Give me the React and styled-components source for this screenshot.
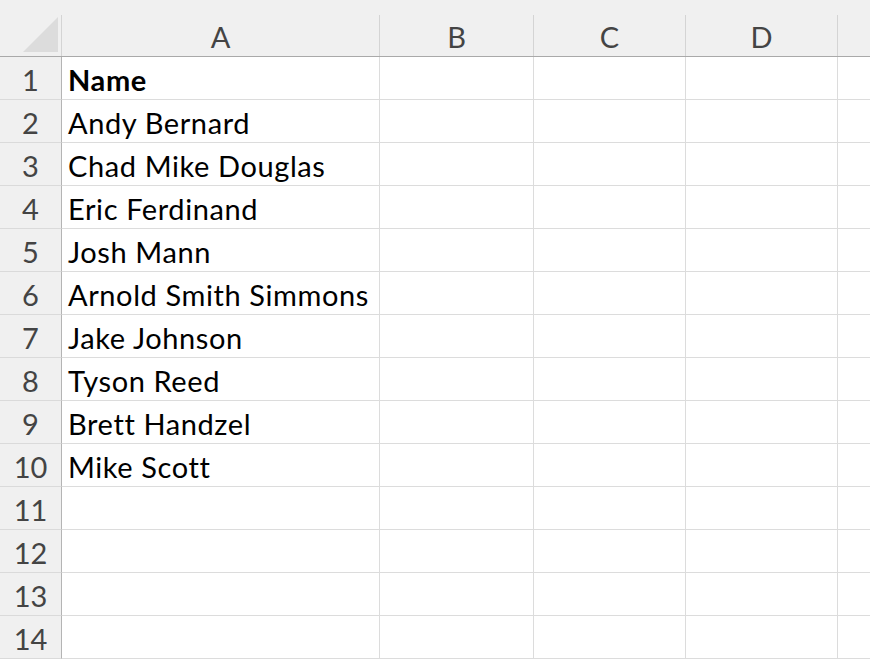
import React from "react";
import styled, { createGlobalStyle, css } from "styled-components";

const GlobalStyle = createGlobalStyle`
  html, body {
    margin: 0;
    padding: 0;
    background: #ffffff;
  }
  body {
    font-family: "Lato", "Liberation Sans", sans-serif;
    overflow: hidden;
  }
`;

const NAMES = [
  "Name",
  "Andy Bernard",
  "Chad Mike Douglas",
  "Eric Ferdinand",
  "Josh Mann",
  "Arnold Smith Simmons",
  "Jake Johnson",
  "Tyson Reed",
  "Brett Handzel",
  "Mike Scott",
];

const COLUMNS = ["A", "B", "C", "D", ""];
const ROW_COUNT = 14;

const gridColumns = css`
  display: grid;
  grid-template-columns: 62px 318px 154px 152px 152px 1fr;
`;

const Sheet = styled.div`
  width: 870px;
  height: 659px;
  overflow: hidden;
  display: flex;
  flex-direction: column;
  font-size: 29px;
`;

const HeaderRow = styled.div`
  ${gridColumns};
  padding-top: 15px;
  height: 58px;
  box-sizing: border-box;
  background: #f0f0f0;
  border-bottom: 1px solid #a9a9a9;
`;

const Corner = styled.div`
  display: flex;
  justify-content: flex-end;
  align-items: flex-end;
  padding: 0 3px 4px 0;
  border-right: 1px solid #d4d4d4;
`;

const Triangle = styled.div`
  width: 35px;
  height: 35px;
  background: #dcdcdc;
  clip-path: polygon(100% 0, 100% 100%, 0 100%);
`;

const ColHead = styled.div`
  display: flex;
  align-items: center;
  justify-content: center;
  padding-top: 1px;
  color: #444444;
  border-right: 1px solid #d4d4d4;
  ${(p) => p.$last && "border-right: none;"}
`;

const Row = styled.div`
  ${gridColumns};
  height: 43px;
  flex-shrink: 0;
`;

const RowHead = styled.div`
  display: flex;
  align-items: center;
  justify-content: center;
  padding-top: 3px;
  background: #f0f0f0;
  color: #444444;
  border-right: 1px solid #b4b4b4;
  border-bottom: 1px solid #dadada;
`;

const Cell = styled.div`
  display: flex;
  align-items: center;
  padding: 3px 0 0 6px;
  color: #000000;
  white-space: nowrap;
  letter-spacing: 0.6px;
  font-weight: ${(p) => (p.$bold ? 700 : 400)};
  border-right: 1px solid #dcdcdc;
  border-bottom: 1px solid #dcdcdc;
  ${(p) => p.$last && "border-right: none;"}
`;

export default function App() {
  const rows = Array.from({ length: ROW_COUNT }, (_, i) => i + 1);
  return (
    <>
      <GlobalStyle />
      <Sheet>
        <HeaderRow>
          <Corner>
            <Triangle />
          </Corner>
          {COLUMNS.map((c, i) => (
            <ColHead key={i} $last={i === COLUMNS.length - 1}>
              {c}
            </ColHead>
          ))}
        </HeaderRow>
        {rows.map((n) => (
          <Row key={n}>
            <RowHead>{n}</RowHead>
            {COLUMNS.map((c, i) => (
              <Cell key={i} $bold={n === 1 && i === 0} $last={i === COLUMNS.length - 1}>
                {i === 0 ? NAMES[n - 1] || "" : ""}
              </Cell>
            ))}
          </Row>
        ))}
      </Sheet>
    </>
  );
}
